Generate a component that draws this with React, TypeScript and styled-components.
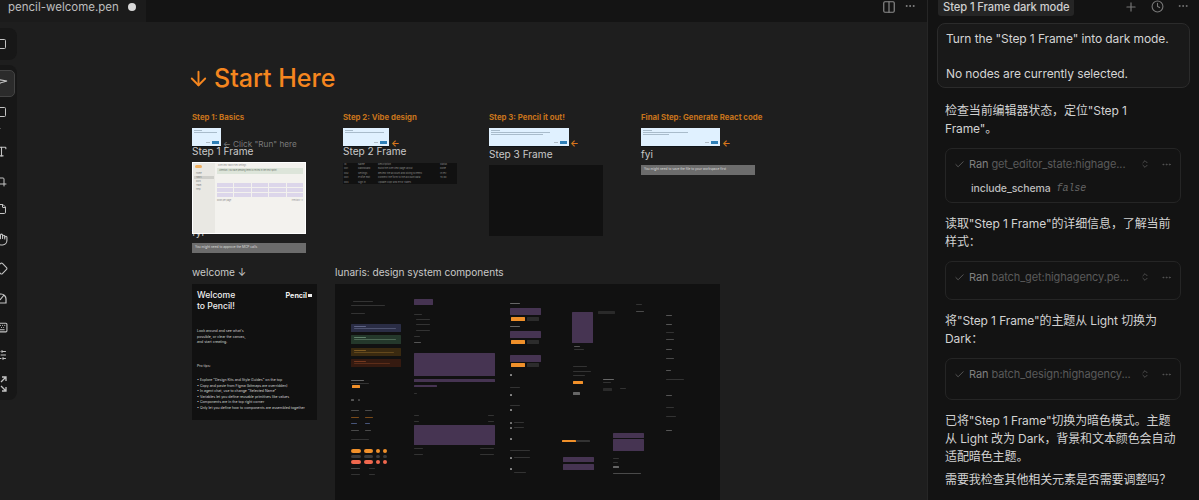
import React from 'react';
import styled, { createGlobalStyle } from 'styled-components';
import {
    ArrowDown,
    Check,
    ChevronDown,
    ChevronsUpDown,
    Clock,
    Columns2,
    Crop,
    Diamond,
    Ellipsis,
    Hand,
    Keyboard,
    Plus,
    SlidersHorizontal,
    Square,
    StickyNote,
    Type,
} from 'lucide-react';

const GlobalStyle = createGlobalStyle`
    html, body {
        margin: 0;
        padding: 0;
        background: #131313;
    }
    body {
        font-family: Inter, "Noto Sans CJK SC", sans-serif;
    }
`;

const Shell = styled.div`
    display: flex;
    width: 1199px;
    height: 500px;
    overflow: hidden;
`;

const Editor = styled.div`
    display: flex;
    flex-direction: column;
    width: 927px;
    height: 500px;
`;

const TabBar = styled.div`
    display: flex;
    align-items: stretch;
    justify-content: space-between;
    flex: 0 0 22px;
    height: 22px;
    background: #141414;
`;

const Tab = styled.div`
    display: flex;
    align-items: flex-start;
    width: 146px;
    padding-left: 8px;
    box-sizing: border-box;
    background: #1b1b1b;
    color: #bdbdbd;
    font-size: 11.5px;
    line-height: 15px;
    white-space: nowrap;
`;

const TabDot = styled.span`
    flex: none;
    width: 8px;
    height: 8px;
    margin: 3px 0 0 9px;
    border-radius: 50%;
    background: #d8d8d8;
`;

const TabActions = styled.div`
    display: flex;
    align-items: flex-start;
    gap: 8px;
    padding-right: 11px;
    color: #8a8a8a;
`;

const CanvasArea = styled.div`
    position: relative;
    flex: 1;
    overflow: hidden;
    background: #1e1e1e;
`;

const ToolGroup = styled.div<{ $top: number; $height: number }>`
    position: absolute;
    left: 0;
    top: ${(p) => p.$top}px;
    width: 17px;
    height: ${(p) => p.$height}px;
    border-radius: 0 8px 8px 0;
    background: #171717;
    overflow: hidden;
`;

const ToolSlot = styled.div<{ $y: number }>`
    position: absolute;
    left: -5px;
    top: ${(p) => p.$y}px;
    display: flex;
    color: #c4c4c4;
`;

const ActiveTool = styled.div`
    position: absolute;
    left: -10px;
    top: 5px;
    width: 23px;
    height: 25px;
    border: 1px solid #444;
    border-radius: 5px;
    background: #2b2b2b;
`;

const Place = styled.div.attrs<{ $x: number; $y: number; $w?: number; $h?: number; $c?: string }>((p) => ({
    style: {
        left: p.$x,
        top: p.$y - 22,
        width: p.$w,
        height: p.$h,
        background: p.$c,
    },
}))<{ $x: number; $y: number; $w?: number; $h?: number; $c?: string }>`
    position: absolute;
    white-space: nowrap;
`;

const Title = styled(Place)`
    display: flex;
    align-items: center;
    gap: 4px;
    color: #f5861f;
    font-size: 25px;
    font-weight: 500;
    line-height: 28px;
`;

const StepHeading = styled(Place)`
    color: #c8741c;
    font-size: 7.8px;
    font-weight: 700;
    line-height: 10px;
`;

const FrameLabel = styled(Place)`
    color: #c9c9c9;
    font-size: 10.1px;
    line-height: 14px;
`;

const RunHint = styled(Place)`
    color: #7a7a7a;
    font-size: 8.2px;
    line-height: 10px;
`;

const OrangeArrow = styled(Place)`
    color: #d9771c;
    font-size: 9px;
    font-weight: 700;
    line-height: 10px;
`;

const PromptThumb = styled(Place)`
    display: flex;
    flex-direction: column;
    gap: 1px;
    padding: 2px;
    box-sizing: border-box;
    background: #e0f1ff;
    border-bottom: 1px solid #0f1418;
`;

const ThumbLine = styled.div<{ $w: string }>`
    width: ${(p) => p.$w};
    height: 1px;
    background: #a9bccb;
`;

const ThumbFoot = styled.div`
    display: flex;
    justify-content: flex-end;
    align-items: center;
    gap: 2px;
    margin-top: auto;
`;

const ThumbCancel = styled.div`
    width: 4px;
    height: 1px;
    background: #b0bcc6;
`;

const ThumbRun = styled.div`
    width: 7px;
    height: 3px;
    background: #2f80b8;
`;

const LightFrame = styled(Place)`
    display: flex;
    background: #f3f2ee;
    border: 1px solid #fff;
    box-sizing: border-box;
`;

const LightSidebar = styled.div`
    display: flex;
    flex-direction: column;
    gap: 1px;
    flex: 0 0 22px;
    padding: 2px 1px;
    box-sizing: border-box;
    background: #e9e8e3;
`;

const LightLogo = styled.div`
    width: 7px;
    height: 3px;
    margin: 0 0 3px 1px;
    border-radius: 2px;
    background: #f0b060;
`;

const LightNav = styled.div<{ $on?: boolean }>`
    height: 3px;
    background: ${(p) => (p.$on ? '#cfcfca' : 'transparent')};
    color: #777;
    font-size: 2px;
    line-height: 3px;
    padding-left: 2px;
`;

const LightMain = styled.div`
    flex: 1;
    display: flex;
    flex-direction: column;
    padding: 1px 2px 0 2px;
`;

const LightCrumb = styled.div`
    height: 3px;
    color: #888;
    font-size: 2px;
    line-height: 3px;
    padding-left: 1px;
`;

const LightNotice = styled.div`
    height: 6px;
    margin-top: 1px;
    background: #dde5da;
    color: #5e6b5e;
    font-size: 2px;
    line-height: 3px;
    padding: 1px 2px 0;
    box-sizing: border-box;
`;

const LightGrid = styled.div`
    display: grid;
    grid-template-columns: repeat(5, 1fr);
    gap: 1px 1px;
    margin-top: 4px;
`;

const LightCell = styled.div<{ $head?: boolean }>`
    height: 4px;
    background: ${(p) => (p.$head ? 'transparent' : '#dcd6ea')};
`;

const LightPager = styled.div`
    display: flex;
    justify-content: space-between;
    margin-top: 2px;
    color: #888;
    font-size: 2px;
`;

const NoteBar = styled(Place)`
    padding: 2px 3px;
    box-sizing: border-box;
    background: #6c6c6c;
    color: #dcdcdc;
    font-size: 3.2px;
    line-height: 5px;
`;

const DarkBlock = styled(Place)`
    background: #111;
`;

const SessionTable = styled(DarkBlock)`
    display: grid;
    grid-template-columns: 14px 20px 62px 1fr;
    grid-auto-rows: 4.4px;
    padding: 0 1px;
    box-sizing: border-box;
    color: #8a8a8a;
    font-size: 2.4px;
    line-height: 4.4px;
`;

const WelcomeCard = styled(DarkBlock)`
    display: flex;
    flex-direction: column;
    padding: 6px 5px;
    box-sizing: border-box;
    color: #d6d6d6;
`;

const WelcomeTop = styled.div`
    display: flex;
    justify-content: space-between;
`;

const WelcomeHeading = styled.div`
    color: #f0f0f0;
    font-size: 8.6px;
    font-weight: 500;
    line-height: 10.6px;
`;

const WelcomeLogo = styled.div`
    display: flex;
    gap: 1px;
    margin: 2px 0 0 0;
    color: #f0f0f0;
    font-size: 7.2px;
    font-weight: 700;
    line-height: 8px;
`;

const LogoFlag = styled.span`
    width: 4px;
    height: 3px;
    margin-top: 2px;
    background: #eee;
`;

const WelcomeText = styled.div<{ $gap: number }>`
    margin-top: ${(p) => p.$gap}px;
    font-size: 3.5px;
    line-height: 5.5px;
`;

const Sketch = styled(Place)`
    border-radius: 0.5px;
`;

const Pill = styled(Place)`
    border-radius: 2px;
`;

const SidePanel = styled.div`
    display: flex;
    flex-direction: column;
    width: 272px;
    height: 500px;
    box-sizing: border-box;
    border-left: 1px solid #262626;
    background: #131313;
    color: #d2d2d2;
    font-size: 12px;
    letter-spacing: -0.1px;
    line-height: 18px;
`;

const PanelHeader = styled.div`
    display: flex;
    flex: none;
    align-items: flex-start;
    justify-content: space-between;
    height: 23px;
    padding: 0 10px;
`;

const SessionChip = styled.div`
    padding: 0 5px;
    height: 16px;
    border-radius: 0 0 3px 3px;
    background: #252525;
    color: #cfcfcf;
    font-size: 11.2px;
    font-weight: 500;
    line-height: 15px;
`;

const HeaderIcons = styled.div`
    display: flex;
    gap: 13px;
    color: #777;
`;

const PromptBubble = styled.div`
    flex: none;
    width: 253px;
    height: 65px;
    margin-left: 9px;
    padding: 6px 8px;
    box-sizing: border-box;
    border: 1px solid #2b2b2b;
    border-radius: 8px;
    background: #191919;
    color: #d4d4d4;
    line-height: 17.5px;
`;

const Thread = styled.div`
    display: flex;
    flex-direction: column;
    gap: 11px;
    padding: 13px 18px 0 17px;
`;

const Message = styled.div<{ $tight?: boolean }>`
    flex: none;
    margin-top: ${(p) => (p.$tight ? -5 : 1)}px;
    margin-bottom: -1px;
    white-space: nowrap;
`;

const ToolCard = styled.div<{ $h: number }>`
    flex: none;
    height: ${(p) => p.$h}px;
    padding: 6px 8px;
    box-sizing: border-box;
    border: 1px solid #252525;
    border-radius: 7px;
    color: #5a5a5a;
`;

const ToolRow = styled.div`
    display: flex;
    align-items: center;
    gap: 4px;
    height: 18px;
    font-size: 11px;
`;

const ToolName = styled.div`
    flex: 1;
    white-space: nowrap;
`;

const RanWord = styled.span`
    color: #808080;
`;

const RowIcons = styled.div`
    display: flex;
    align-items: center;
    gap: 11px;
    color: #555;
`;

const ToolArgs = styled.div`
    display: flex;
    gap: 6px;
    margin: 7px 0 0 17px;
    color: #bcbcbc;
    font-size: 10.5px;
    font-weight: 500;
`;

const ArgValue = styled.span`
    color: #666;
    font-family: "Liberation Mono", monospace;
    font-size: 10px;
    font-style: italic;
    font-weight: 400;
`;

const Expand = () => (
    <svg width="12" height="16" viewBox="0 0 12 16" fill="none" stroke="currentColor" strokeWidth="1.3">
        <path d="M6 6 L11 1 M7 1 H11 V5" />
        <path d="M6 10 L11 15 M7 15 H11 V11" />
    </svg>
);

const Pointer = () => (
    <svg width="13" height="13" viewBox="0 0 13 13" fill="none" stroke="currentColor" strokeWidth="1.2">
        <path d="M0 3 L12 5 L5 7 L3 12 Z" />
    </svg>
);

const Gauge = () => (
    <svg width="13" height="13" viewBox="0 0 13 13" fill="none" stroke="currentColor" strokeWidth="1.2">
        <path d="M1 11 H11 V7 A5 5 0 0 0 1 7 Z M5 8 L9 3" />
    </svg>
);

const tools: Array<[number, React.ReactNode]> = [
    [11, <Pointer />],
    [41, <Square size={12} />],
    [61, <ChevronDown size={7} />],
    [80, <Type size={13} />],
    [110, <Crop size={12} />],
    [138, <StickyNote size={12} />],
    [168, <Hand size={13} />],
    [197, <Diamond size={13} />],
    [227, <Gauge />],
    [256, <Keyboard size={13} />],
    [284, <SlidersHorizontal size={12} />],
    [311, <Expand />],
];

const purple = '#463452';
const orange = '#f0902a';
const line = '#333';

// the design system frame is only a far-away view: x, y, w, h, colour
const lunarisParts: Array<[number, number, number, number, string]> = [
    [414, 299, 19, 6, purple],
    [414, 353, 81, 23, purple],
    [414, 379, 81, 3, purple],
    [414, 385, 23, 2, purple],
    [414, 425, 81, 20, purple],
    [351, 324, 50, 8, '#2a2d45'],
    [351, 335, 50, 9, '#24382b'],
    [351, 348, 50, 8, '#3a2a10'],
    [351, 359, 50, 8, '#351a10'],
    [354, 326, 12, 1, '#5f6484'],
    [354, 328, 42, 1, '#4f5470'],
    [354, 337, 12, 1, '#5f8069'],
    [354, 339, 42, 1, '#4d6855'],
    [354, 350, 12, 1, '#7d5a22'],
    [354, 352, 40, 1, '#63481c'],
    [354, 361, 12, 1, '#75391f'],
    [354, 363, 36, 1, '#5c2d19'],
    [352, 385, 8, 3, orange],
    [510, 308, 31, 7, purple],
    [510, 331, 31, 7, purple],
    [510, 355, 31, 7, purple],
    [511, 317, 14, 4, orange],
    [511, 340, 14, 4, orange],
    [511, 363, 14, 4, orange],
    [527, 317, 12, 4, '#2c2c2c'],
    [527, 340, 12, 4, '#2c2c2c'],
    [527, 363, 12, 4, '#2c2c2c'],
    [572, 312, 21, 31, purple],
    [573, 381, 10, 3, orange],
    [562, 440, 14, 2, orange],
    [576, 440, 14, 2, '#333'],
    [563, 457, 31, 5, purple],
    [563, 464, 31, 6, purple],
    [613, 433, 31, 5, purple],
    [613, 439, 31, 12, purple],
    [598, 311, 17, 3, '#2a2a2a'],
    [353, 301, 20, 1, line],
    [351, 305, 34, 1, line],
    [351, 313, 14, 1, line],
    [414, 314, 8, 1, line],
    [416, 319, 14, 1, line],
    [416, 324, 14, 1, line],
    [416, 330, 14, 1, line],
    [414, 336, 6, 1, line],
    [414, 342, 7, 1, '#555'],
    [414, 393, 3, 1, line],
    [414, 415, 5, 1, line],
    [488, 415, 6, 1, line],
    [414, 421, 5, 1, line],
    [488, 421, 6, 1, line],
    [414, 448, 9, 1, line],
    [480, 448, 14, 1, line],
    [414, 454, 9, 1, line],
    [480, 454, 14, 1, line],
    [351, 380, 13, 1, '#666'],
    [351, 383, 18, 1, line],
    [351, 399, 3, 2, '#555'],
    [358, 399, 2, 2, '#444'],
    [351, 410, 8, 1, '#4a4a4a'],
    [365, 410, 7, 1, '#4a4a4a'],
    [351, 417, 8, 1, '#7a4a18'],
    [365, 417, 8, 1, '#7a4a18'],
    [351, 423, 6, 1, '#47557a'],
    [365, 423, 5, 1, '#47557a'],
    [351, 430, 8, 1, '#4a4a4a'],
    [365, 430, 6, 1, '#4a4a4a'],
    [351, 439, 18, 1, line],
    [351, 468, 9, 1, '#4a4a4a'],
    [369, 468, 6, 1, line],
    [351, 474, 9, 1, line],
    [369, 474, 6, 1, line],
    [510, 303, 10, 1, '#666'],
    [510, 326, 10, 1, '#666'],
    [510, 374, 2, 2, '#888'],
    [510, 387, 10, 1, line],
    [510, 394, 2, 2, '#888'],
    [510, 405, 10, 1, line],
    [510, 409, 2, 2, '#888'],
    [510, 422, 2, 2, '#777'],
    [514, 422, 10, 1, line],
    [510, 427, 2, 2, '#777'],
    [514, 427, 10, 1, line],
    [510, 438, 2, 2, '#888'],
    [510, 450, 20, 1, line],
    [510, 457, 2, 2, '#888'],
    [514, 457, 16, 1, line],
    [510, 468, 2, 2, '#888'],
    [514, 472, 12, 1, line],
    [574, 346, 6, 1, '#555'],
    [574, 349, 10, 1, line],
    [573, 366, 14, 1, line],
    [573, 371, 18, 1, line],
    [573, 375, 12, 1, line],
    [573, 392, 7, 3, '#666'],
    [603, 379, 11, 1, '#666'],
    [603, 382, 8, 1, line],
    [603, 388, 9, 3, '#2b2b2b'],
    [620, 388, 6, 1, line],
    [636, 304, 6, 1, line],
    [636, 311, 8, 1, '#4a4a4a'],
    [666, 315, 6, 1, '#555'],
    [666, 324, 6, 1, '#555'],
    [666, 332, 8, 1, line],
    [666, 339, 8, 1, '#4a4a4a'],
    [666, 349, 6, 1, '#555'],
    [666, 358, 8, 1, '#4a4a4a'],
    [666, 370, 5, 1, '#555'],
    [666, 379, 18, 1, line],
    [666, 395, 6, 1, '#555'],
    [666, 407, 8, 1, line],
    [666, 416, 10, 1, line],
    [666, 430, 6, 1, '#555'],
    [613, 458, 6, 1, line],
    [613, 462, 5, 1, line],
    [613, 466, 6, 2, '#666'],
    [613, 473, 28, 1, '#4a4a4a'],
];

const buttonRows: Array<[number, number, string]> = [
    [449, 4, orange],
    [455, 3, '#3a3a3a'],
    [460, 4, '#f0684e'],
];

const sessionRows = [
    ['ID', 'Name', 'Description', 'Status'],
    ['001', 'Dashboard', 'Build the overview page layout', 'Done'],
    ['002', 'Settings', 'Review the account and billing screens', 'In rev.'],
    ['003', 'Profile edit', 'Connect the form to the account data', 'To do'],
    ['004', 'Sign in', 'Update copy and error states', ''],
];

const App: React.FC = () => {
    return (
        <Shell>
            <GlobalStyle />
            <Editor>
                <TabBar>
                    <Tab>
                        pencil-welcome.pen
                        <TabDot />
                    </Tab>
                    <TabActions>
                        <Columns2 size={14} />
                        <Ellipsis size={12} />
                    </TabActions>
                </TabBar>
                <CanvasArea>
                    <Title $x={187} $y={64}>
                        <ArrowDown size={23} strokeWidth={2} />
                        Start Here
                    </Title>

                    <StepHeading $x={192} $y={112}>Step 1: Basics</StepHeading>
                    <StepHeading $x={343} $y={112}>Step 2: Vibe design</StepHeading>
                    <StepHeading $x={489} $y={112}>Step 3: Pencil it out!</StepHeading>
                    <StepHeading $x={641} $y={112}>Final Step: Generate React code</StepHeading>

                    <FrameLabel $x={192} $y={225}>fyi</FrameLabel>

                    <PromptThumb $x={192} $y={128} $w={29} $h={19}>
                        <ThumbLine $w="30%" />
                        <ThumbLine $w="90%" />
                        <ThumbFoot><ThumbCancel /><ThumbRun /></ThumbFoot>
                    </PromptThumb>
                    <RunHint $x={223} $y={139}>← Click "Run" here</RunHint>
                    <FrameLabel $x={192} $y={144}>Step 1 Frame</FrameLabel>

                    <PromptThumb $x={343} $y={128} $w={46} $h={19}>
                        <ThumbLine $w="20%" />
                        <ThumbLine $w="92%" />
                        <ThumbFoot><ThumbCancel /><ThumbRun /></ThumbFoot>
                    </PromptThumb>
                    <OrangeArrow $x={391} $y={138}>←</OrangeArrow>
                    <FrameLabel $x={343} $y={144}>Step 2 Frame</FrameLabel>

                    <PromptThumb $x={489} $y={128} $w={80} $h={19}>
                        <ThumbLine $w="12%" />
                        <ThumbLine $w="78%" />
                        <ThumbLine $w="68%" />
                        <ThumbFoot><ThumbCancel /><ThumbRun /></ThumbFoot>
                    </PromptThumb>
                    <OrangeArrow $x={570} $y={138}>←</OrangeArrow>
                    <FrameLabel $x={489} $y={147}>Step 3 Frame</FrameLabel>

                    <PromptThumb $x={641} $y={128} $w={79} $h={19}>
                        <ThumbLine $w="12%" />
                        <ThumbLine $w="60%" />
                        <ThumbLine $w="35%" />
                        <ThumbFoot><ThumbCancel /><ThumbRun /></ThumbFoot>
                    </PromptThumb>
                    <OrangeArrow $x={722} $y={138}>←</OrangeArrow>
                    <FrameLabel $x={641} $y={147}>fyi</FrameLabel>

                    <LightFrame $x={192} $y={162} $w={114} $h={72}>
                        <LightSidebar>
                            <LightLogo />
                            <LightNav>Home</LightNav>
                            <LightNav $on>Tasks</LightNav>
                            <LightNav>Docs</LightNav>
                            <LightNav>Team</LightNav>
                            <LightNav>Help</LightNav>
                        </LightSidebar>
                        <LightMain>
                            <LightCrumb>Overview  Tasks  Files  Settings</LightCrumb>
                            <LightNotice>Attention: you have pending items to review in the next sprint</LightNotice>
                            <LightGrid>
                                {Array.from({ length: 5 }, (_, i) => <LightCell key={`h${i}`} $head />)}
                                {Array.from({ length: 15 }, (_, i) => <LightCell key={i} />)}
                            </LightGrid>
                            <LightPager>
                                <span>Rows per page</span>
                                <span>Previous  1  2</span>
                            </LightPager>
                        </LightMain>
                    </LightFrame>
                    <NoteBar $x={192} $y={243} $w={114} $h={10}>You might need to approve the MCP calls</NoteBar>

                    <SessionTable $x={343} $y={163} $w={114} $h={21}>
                        {sessionRows.flat().map((cell, i) => <span key={i}>{cell}</span>)}
                    </SessionTable>

                    <DarkBlock $x={489} $y={165} $w={114} $h={71} />
                    <NoteBar $x={641} $y={165} $w={114} $h={10}>You might need to save the file to your workspace first</NoteBar>

                    <FrameLabel $x={192} $y={265}>welcome ↓</FrameLabel>
                    <FrameLabel $x={335} $y={265}>lunaris: design system components</FrameLabel>

                    <WelcomeCard $x={192} $y={284} $w={125} $h={136}>
                        <WelcomeTop>
                            <WelcomeHeading>Welcome<br />to Pencil!</WelcomeHeading>
                            <WelcomeLogo>Pencil<LogoFlag /></WelcomeLogo>
                        </WelcomeTop>
                        <WelcomeText $gap={18}>
                            Look around and see what's<br />possible, or clear the canvas,<br />and start creating.
                        </WelcomeText>
                        <WelcomeText $gap={18}>Pro tips:</WelcomeText>
                        <WelcomeText $gap={9}>
                            • Explore "Design Kits and Style Guides" on the top<br />
                            • Copy and paste from Figma (bitmaps are overridden)<br />
                            • In agent chat, use to change "Selected Name"<br />
                            • Variables let you define reusable primitives like values<br />
                            • Components are in the top right corner<br />
                            • Only let you define how to components are assembled together
                        </WelcomeText>
                    </WelcomeCard>

                    <DarkBlock $x={335} $y={284} $w={385} $h={216} />
                    {lunarisParts.map(([x, y, w, h, c], i) => (
                        <Sketch key={i} $x={x} $y={y} $w={w} $h={h} $c={c} />
                    ))}
                    {buttonRows.map(([y, h, c]) => (
                        <React.Fragment key={y}>
                            <Pill $x={351} $y={y} $w={10} $h={h} $c={c} />
                            <Pill $x={364} $y={y} $w={9} $h={h} $c={c} />
                            <Pill $x={376} $y={y} $w={4} $h={h} $c={c} />
                            <Pill $x={383} $y={y} $w={4} $h={h} $c={c} />
                        </React.Fragment>
                    ))}

                    <ToolGroup $top={6} $height={32}>
                        <ToolSlot $y={10}><Square size={12} /></ToolSlot>
                    </ToolGroup>
                    <ToolGroup $top={43} $height={335}>
                        <ActiveTool />
                        {tools.map(([y, icon], i) => (
                            <ToolSlot key={i} $y={y}>{icon}</ToolSlot>
                        ))}
                    </ToolGroup>
                </CanvasArea>
            </Editor>

            <SidePanel>
                <PanelHeader>
                    <SessionChip>Step 1 Frame dark mode</SessionChip>
                    <HeaderIcons>
                        <Plus size={14} />
                        <Clock size={13} />
                        <Ellipsis size={12} />
                    </HeaderIcons>
                </PanelHeader>
                <PromptBubble>
                    Turn the "Step 1 Frame" into dark mode.
                    <br />
                    <br />
                    No nodes are currently selected.
                </PromptBubble>
                <Thread>
                    <Message>
                        检查当前编辑器状态，定位"Step 1
                        <br />
                        Frame"。
                    </Message>
                    <ToolCard $h={55}>
                        <ToolRow>
                            <Check size={11} />
                            <ToolName><RanWord>Ran</RanWord> get_editor_state:highage...</ToolName>
                            <RowIcons>
                                <ChevronsUpDown size={10} />
                                <Ellipsis size={11} />
                            </RowIcons>
                        </ToolRow>
                        <ToolArgs>
                            include_schema
                            <ArgValue>false</ArgValue>
                        </ToolArgs>
                    </ToolCard>
                    <Message>
                        读取"Step 1 Frame"的详细信息，了解当前
                        <br />
                        样式：
                    </Message>
                    <ToolCard $h={39}>
                        <ToolRow>
                            <Check size={11} />
                            <ToolName><RanWord>Ran</RanWord> batch_get:highagency.pe...</ToolName>
                            <RowIcons>
                                <ChevronsUpDown size={10} />
                                <Ellipsis size={11} />
                            </RowIcons>
                        </ToolRow>
                    </ToolCard>
                    <Message>
                        将"Step 1 Frame"的主题从 Light 切换为
                        <br />
                        Dark：
                    </Message>
                    <ToolCard $h={42}>
                        <ToolRow>
                            <Check size={11} />
                            <ToolName><RanWord>Ran</RanWord> batch_design:highagency...</ToolName>
                            <RowIcons>
                                <ChevronsUpDown size={10} />
                                <Ellipsis size={11} />
                            </RowIcons>
                        </ToolRow>
                    </ToolCard>
                    <Message>
                        已将"Step 1 Frame"切换为暗色模式。主题
                        <br />
                        从 Light 改为 Dark，背景和文本颜色会自动
                        <br />
                        适配暗色主题。
                    </Message>
                    <Message $tight>需要我检查其他相关元素是否需要调整吗？</Message>
                </Thread>
            </SidePanel>
        </Shell>
    );
};

export default App;
